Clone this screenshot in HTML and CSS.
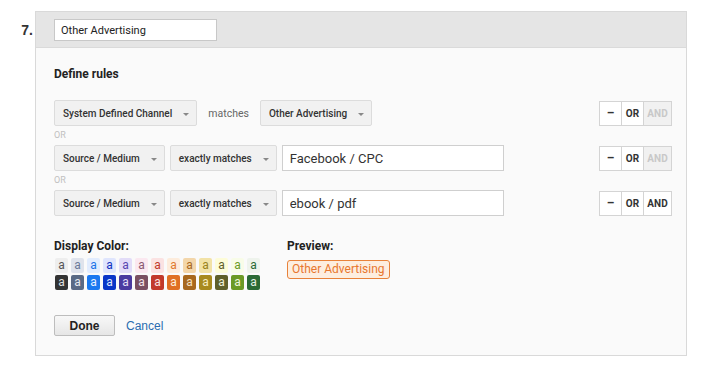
FILE: index.html
```html
<!doctype html>
<html lang="en-US">
<head>
<title>Channel Grouping - Other Advertising</title>
<link rel="stylesheet" href="styles.css">
</head>
<body>
<div class="channel">
	<div class="channel-num">7.</div>
	<div class="card">
		<div class="card-head">
			<input class="name-input" type="text" value="Other Advertising">
		</div>
		<div class="card-body">
			<h3 class="label define">Define rules</h3>

			<div class="rule">
				<div class="dropdown">System Defined Channel<span class="caret"></span></div>
				<span class="op-text">matches</span>
				<div class="dropdown">Other Advertising<span class="caret"></span></div>
				<div class="logic">
					<span class="lbtn">&ndash;</span>
					<span class="lbtn">OR</span>
					<span class="lbtn and off">AND</span>
				</div>
			</div>
			<div class="or-sep">OR</div>
			<div class="rule">
				<div class="dropdown">Source / Medium<span class="caret"></span></div>
				<div class="dropdown">exactly matches<span class="caret"></span></div>
				<input class="value-input" type="text" value="Facebook / CPC">
				<div class="logic">
					<span class="lbtn">&ndash;</span>
					<span class="lbtn">OR</span>
					<span class="lbtn and off">AND</span>
				</div>
			</div>
			<div class="or-sep">OR</div>
			<div class="rule">
				<div class="dropdown">Source / Medium<span class="caret"></span></div>
				<div class="dropdown">exactly matches<span class="caret"></span></div>
				<input class="value-input" type="text" value="ebook / pdf">
				<div class="logic">
					<span class="lbtn">&ndash;</span>
					<span class="lbtn">OR</span>
					<span class="lbtn and">AND</span>
				</div>
			</div>

			<div class="display">
				<div class="colors">
					<h3 class="label">Display Color:</h3>
					<div class="swatches">
						<span class="sw l1">a</span>
						<span class="sw l2">a</span>
						<span class="sw l3">a</span>
						<span class="sw l4">a</span>
						<span class="sw l5">a</span>
						<span class="sw l6">a</span>
						<span class="sw l7">a</span>
						<span class="sw l8">a</span>
						<span class="sw l9">a</span>
						<span class="sw l10">a</span>
						<span class="sw l11">a</span>
						<span class="sw l12">a</span>
						<span class="sw l13">a</span>
						<span class="sw d1">a</span>
						<span class="sw d2">a</span>
						<span class="sw d3">a</span>
						<span class="sw d4">a</span>
						<span class="sw d5">a</span>
						<span class="sw d6">a</span>
						<span class="sw d7">a</span>
						<span class="sw d8">a</span>
						<span class="sw d9">a</span>
						<span class="sw d10">a</span>
						<span class="sw d11">a</span>
						<span class="sw d12">a</span>
						<span class="sw d13">a</span>
					</div>
				</div>
				<div class="preview">
					<h3 class="label">Preview:</h3>
					<span class="badge">Other Advertising</span>
				</div>
			</div>

			<div class="actions">
				<button class="done">Done</button>
				<a class="cancel" href="#">Cancel</a>
			</div>
		</div>
	</div>
</div>
</body>
</html>
```

FILE: styles.css
```css
html, body {
	margin: 0;
	background: #fff;
	font-family: Roboto, "Liberation Sans", Arial, sans-serif;
	color: #333;
}
.channel {
	display: flex;
	align-items: flex-start;
	padding-top: 11px;
}
.channel-num {
	width: 33px;
	padding-right: 2px;
	margin-top: 11px;
	text-align: right;
	font: bold 14px/16px "Liberation Sans", Arial, sans-serif;
	color: #333;
}
.card {
	width: 650px;
	border: 1px solid #d9d9d9;
	background: #fafafa;
}
.card-head {
	background: #e5e5e5;
	border-bottom: 1px solid #dadada;
	padding: 7px 18px 6px;
}
.name-input {
	display: block;
	box-sizing: border-box;
	width: 163px;
	height: 22px;
	margin: 0;
	padding: 0 6px;
	border: 1px solid #c8c8c8;
	background: #fff;
	font: 11px Roboto, sans-serif;
	color: #222;
	outline: none;
}
.card-body {
	padding: 0 14px 19px 18px;
}
.label {
	margin: 0;
	font-size: 12px;
	line-height: 16px;
	font-weight: bold;
	color: #222;
}
.define {
	margin: 18px 0;
}
.rule {
	display: flex;
	align-items: center;
	gap: 5px;
	height: 26px;
}
.dropdown {
	display: flex;
	align-items: center;
	box-sizing: border-box;
	height: 26px;
	padding: 0 7px 0 8px;
	border: 1px solid #dcdcdc;
	border-radius: 2px;
	background: #f1f1f1;
	font-size: 10px;
	font-weight: 500;
	color: #333;
	white-space: nowrap;
}
.caret {
	width: 0;
	height: 0;
	margin-left: 11px;
	border-left: 3px solid transparent;
	border-right: 3px solid transparent;
	border-top: 3px solid #888;
	margin-top: 2px;
}
.op-text {
	margin: 0 6px;
	font-size: 10.5px;
	color: #666;
}
.value-input {
	box-sizing: border-box;
	width: 222px;
	height: 26px;
	margin: 0;
	padding: 0 7px;
	border: 1px solid #cfcfcf;
	background: #fff;
	font: 13px Roboto, sans-serif;
	color: #333;
	outline: none;
}
.logic {
	display: flex;
	margin-left: auto;
	height: 23px;
	border: 1px solid #d4d4d4;
	background: #fff;
}
.lbtn {
	display: flex;
	align-items: center;
	justify-content: center;
	width: 21px;
	font-size: 10px;
	font-weight: bold;
	color: #333;
	border-left: 1px solid #d4d4d4;
}
.lbtn:first-child {
	border-left: 0;
	font-size: 12px;
}
.lbtn.and {
	width: 27px;
}
.lbtn.off {
	background: #f1f1f1;
	color: #c8c8c8;
}
.or-sep {
	height: 19px;
	line-height: 19px;
	font-size: 9px;
	color: #c0c0c0;
}
.display {
	display: flex;
	margin-top: 22px;
}
.colors {
	width: 233px;
}
.swatches {
	display: grid;
	grid-template-columns: repeat(13, 13px);
	grid-auto-rows: 15px;
	column-gap: 3px;
	row-gap: 2px;
	margin-top: 4px;
	padding-left: 1px;
}
.sw {
	display: flex;
	align-items: center;
	justify-content: center;
	border-radius: 2px;
	font-size: 12px;
	line-height: 1;
	padding-bottom: 1px;
	box-sizing: border-box;
}
.l1 { background: #eeeeee; color: #555; }
.l2 { background: #dfe3ec; color: #6b7a99; }
.l3 { background: #e1ecfe; color: #1a73e8; }
.l4 { background: #dfe5fd; color: #1033c0; }
.l5 { background: #e2dcf8; color: #5747b0; }
.l6 { background: #fbe8f0; color: #8a5a70; }
.l7 { background: #fbe2e2; color: #c0392b; }
.l8 { background: #fdecdc; color: #e07a2e; }
.l9 { background: #f3d6aa; color: #a8681e; }
.l10 { background: #f2e2a6; color: #9a8220; }
.l11 { background: #fdfcd8; color: #5f5f2a; }
.l12 { background: #f8fce8; color: #6b9a26; }
.l13 { background: #eef3ec; color: #2a6a35; }
.d1 { background: #333333; color: #ddd; }
.d2 { background: #5a6a85; color: #e6e9f0; }
.d3 { background: #1a78f0; color: #e6f0ff; }
.d4 { background: #0a36c8; color: #dfe6ff; }
.d5 { background: #4a3aa0; color: #e2ddf6; }
.d6 { background: #7a5062; color: #f4e4ea; }
.d7 { background: #c2392c; color: #fbe2e2; }
.d8 { background: #e07024; color: #fdeede; }
.d9 { background: #a8681e; color: #f5e0c0; }
.d10 { background: #a88a1e; color: #f5ecc0; }
.d11 { background: #5f5f2a; color: #f0f0d8; }
.d12 { background: #6b9a26; color: #eef7dc; }
.d13 { background: #2a6a35; color: #e2f0e4; }
.preview .label {
	margin-bottom: 4px;
}
.badge {
	display: inline-block;
	box-sizing: border-box;
	height: 19px;
	padding: 0 4px;
	border: 1px solid #e8823a;
	border-radius: 3px;
	background: #fdeee0;
	color: #e8772e;
	font-size: 12px;
	line-height: 17px;
}
.actions {
	display: flex;
	align-items: center;
	gap: 11px;
	margin-top: 25px;
}
.done {
	width: 61px;
	height: 21px;
	margin: 0;
	padding: 0;
	border: 1px solid #bdbdbd;
	border-radius: 2px;
	background: linear-gradient(#f8f8f8, #e6e6e6);
	font: bold 12px "Liberation Sans", Arial, sans-serif;
	color: #222;
}
.cancel {
	font: 12px "Liberation Sans", Arial, sans-serif;
	color: #2a6db0;
	text-decoration: none;
}
```
